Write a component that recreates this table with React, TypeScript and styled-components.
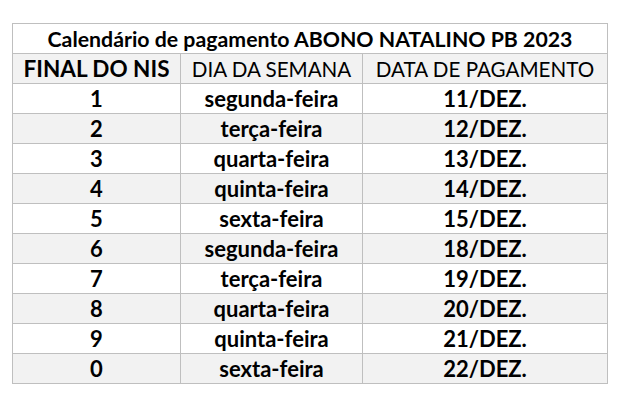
import React from "react";
import styled, { createGlobalStyle } from "styled-components";

const Global = createGlobalStyle`
  html, body { margin: 0; padding: 0; background: #ffffff; }
  body { font-family: "Lato", "Open Sans", sans-serif; }
`;

const Page = styled.div`
  width: 617px;
  height: 400px;
  box-sizing: border-box;
  padding: 23px 0 0 12px;
  background: #ffffff;
`;

const Table = styled.table`
  border-collapse: collapse;
  table-layout: fixed;
  width: 595px;
  color: #000000;
`;

const Row = styled.tr<{ $shade?: boolean }>`
  height: 30px;
  background: ${(p) => (p.$shade ? "#f2f2f2" : "#ffffff")};
`;

const Cell = styled.td<{ $bold?: boolean; $size?: number }>`
  border: 1px solid #bfbfbf;
  padding: 0;
  text-align: center;
  vertical-align: middle;
  font-size: ${(p) => p.$size ?? 22}px;
  font-weight: ${(p) => (p.$bold ? 700 : 400)};
  line-height: 28px;
  white-space: nowrap;
`;

const rows = [
  ["1", "segunda-feira", "11/DEZ."],
  ["2", "terça-feira", "12/DEZ."],
  ["3", "quarta-feira", "13/DEZ."],
  ["4", "quinta-feira", "14/DEZ."],
  ["5", "sexta-feira", "15/DEZ."],
  ["6", "segunda-feira", "18/DEZ."],
  ["7", "terça-feira", "19/DEZ."],
  ["8", "quarta-feira", "20/DEZ."],
  ["9", "quinta-feira", "21/DEZ."],
  ["0", "sexta-feira", "22/DEZ."],
];

export default function App() {
  return (
    <Page>
      <Global />
      <Table>
        <colgroup>
          <col style={{ width: 168 }} />
          <col style={{ width: 182 }} />
          <col style={{ width: 245 }} />
        </colgroup>
        <tbody>
          <Row>
            <Cell colSpan={3} $bold $size={21.3}>
              Calendário de pagamento ABONO NATALINO PB 2023
            </Cell>
          </Row>
          <Row $shade>
            <Cell $bold $size={22.5}>FINAL DO NIS</Cell>
            <Cell $size={20.6}>DIA DA SEMANA</Cell>
            <Cell $size={20.6}>DATA DE PAGAMENTO</Cell>
          </Row>
          {rows.map(([n, d, dt], i) => (
            <Row key={n} $shade={i % 2 === 1}>
              <Cell $bold>{n}</Cell>
              <Cell $bold>{d}</Cell>
              <Cell $bold>{dt}</Cell>
            </Row>
          ))}
        </tbody>
      </Table>
    </Page>
  );
}
